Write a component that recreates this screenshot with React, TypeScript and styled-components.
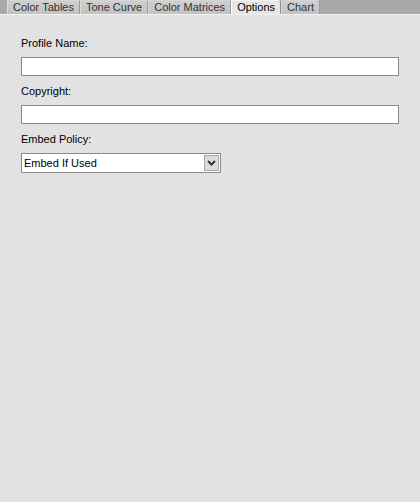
import React from 'react'
import { type ReactElement } from 'react'
import styled, { createGlobalStyle } from 'styled-components'

const GlobalStyle = createGlobalStyle`
html, body {
  margin: 0;
  padding: 0;
  background: #e2e2e2;
}
body {
  font-family: 'Liberation Sans', Arial, sans-serif;
  font-size: 11px;
  color: #000;
}
`

const Window = styled.div`
width: 420px;
height: 502px;
background: #e2e2e2;
display: flex;
flex-direction: column;
`

const TabBar = styled.div`
display: flex;
align-items: flex-end;
height: 14px;
padding-left: 7px;
background: #a9a9a9;
border-bottom: 1px solid #f2f2f2;
`

const Tab = styled.div<{ $active?: boolean, $last?: boolean }>`
height: 13px;
line-height: 13px;
padding: 0 5px;
color: ${p => p.$active ? '#000' : '#333'};
background: ${p => p.$active ? '#e6e6e6' : 'linear-gradient(#cfcfcf, #c2c2c2)'};
border-left: 1px solid ${p => p.$active ? '#ffffff' : '#dcdcdc'};
border-right: 1px solid ${p => p.$active ? '#8c8c8c' : '#9a9a9a'};
border-top: 1px solid ${p => p.$active ? '#f4f4f4' : '#d6d6d6'};
border-top-right-radius: ${p => (p.$active || p.$last) ? '3px' : '0'};
white-space: nowrap;
`

const Form = styled.div`
display: flex;
flex-direction: column;
gap: 8px;
padding: 21px 21px 0 21px;
`

const Field = styled.div`
display: flex;
flex-direction: column;
gap: 7px;
`

const Label = styled.div`
line-height: 14px;
height: 14px;
`

const TextBox = styled.div`
height: 17px;
background: #fff;
border: 1px solid #8a8a8a;
`

const Select = styled.div`
display: flex;
width: 198px;
height: 18px;
background: #fff;
border: 1px solid #8a8a8a;
`

const SelectValue = styled.div`
flex: 1;
line-height: 18px;
padding-left: 2px;
font-size: 11px;
`

const DropButton = styled.div`
width: 15px;
margin: 1px;
background: #dcdcdc;
border: 1px solid #a6a6a6;
box-sizing: border-box;
display: flex;
align-items: center;
justify-content: center;
`

const tabs = ['Color Tables', 'Tone Curve', 'Color Matrices', 'Options', 'Chart']

export default function App (): ReactElement {
  return (
    <Window>
      <GlobalStyle />
      <TabBar>
        {tabs.map((t, i) => (
          <Tab key={t} $active={t === 'Options'} $last={i === tabs.length - 1}>{t}</Tab>
        ))}
      </TabBar>
      <Form>
        <Field>
          <Label>Profile Name:</Label>
          <TextBox />
        </Field>
        <Field>
          <Label>Copyright:</Label>
          <TextBox />
        </Field>
        <Field>
          <Label>Embed Policy:</Label>
          <Select>
            <SelectValue>Embed If Used</SelectValue>
            <DropButton>
              <svg width="9" height="6" viewBox="0 0 9 6">
                <path d="M1 1 L4.5 4.5 L8 1" stroke="#333" strokeWidth="2" fill="none" />
              </svg>
            </DropButton>
          </Select>
        </Field>
      </Form>
    </Window>
  )
}
